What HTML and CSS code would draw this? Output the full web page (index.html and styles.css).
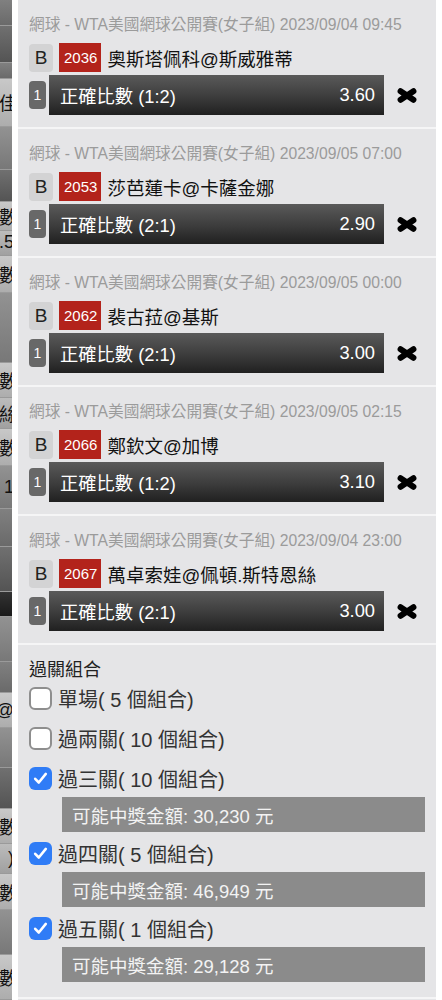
FILE: index.html
```html
<!DOCTYPE html>
<html lang="zh-TW">
<head>
    <meta charset="UTF-8">
    <meta name="viewport" content="width=device-width, initial-scale=1.0">
    <title>投注單</title>
    <link rel="stylesheet" href="styles.css">
</head>
<body>
    <div id="backdrop">
        <div class="bd-row mid h25"></div>
        <div class="bd-row dark h37"></div>
        <div class="bd-row mid h15"></div>
        <div class="bd-row light h48"><span>最佳</span></div>
        <div class="bd-row grey h43"></div>
        <div class="bd-row dark h32"></div>
        <div class="bd-row light h28"><span>比數</span></div>
        <div class="bd-row pale h25"><span class="num">5.5</span></div>
        <div class="bd-row light h37"><span>比數</span></div>
        <div class="bd-row grey h70"></div>
        <div class="bd-row light h35"><span>比數</span></div>
        <div class="bd-row pale h30"><span>組絲</span></div>
        <div class="bd-row light h37"><span>比數</span></div>
        <div class="bd-row grey h43"><span class="num">1</span></div>
        <div class="bd-row mid h37"></div>
        <div class="bd-row dark h45"></div>
        <div class="bd-row black h25"></div>
        <div class="bd-row grey h45"></div>
        <div class="bd-row mid h30"></div>
        <div class="bd-row light h35"><span class="num">@</span></div>
        <div class="bd-row grey h40"></div>
        <div class="bd-row dark h40"></div>
        <div class="bd-row light h35"><span>比數</span></div>
        <div class="bd-row pale h30"><span class="num">)</span></div>
        <div class="bd-row light h35"><span>比數</span></div>
        <div class="bd-row grey h45"></div>
        <div class="bd-row light h45"><span>比數</span></div>
    </div>

    <div id="slip">
        <div class="bet">
            <div class="bet-head">網球 - WTA美國網球公開賽(女子組) 2023/09/04 09:45</div>
            <div class="bet-match">
                <span class="tag-b">B</span>
                <span class="tag-no">2036</span>
                <span class="team">奧斯塔佩科@斯威雅蒂</span>
            </div>
            <div class="bet-pick">
                <span class="leg">1</span>
                <div class="pick-bar"><span>正確比數 (1:2)</span><span>3.60</span></div>
                <svg class="remove" width="20" height="15" viewBox="0 0 20 15"><path d="M3.6 3.2L16.4 11.8M16.4 3.2L3.6 11.8"/></svg>
            </div>
        </div>
        <div class="bet">
            <div class="bet-head">網球 - WTA美國網球公開賽(女子組) 2023/09/05 07:00</div>
            <div class="bet-match">
                <span class="tag-b">B</span>
                <span class="tag-no">2053</span>
                <span class="team">莎芭蓮卡@卡薩金娜</span>
            </div>
            <div class="bet-pick">
                <span class="leg">1</span>
                <div class="pick-bar"><span>正確比數 (2:1)</span><span>2.90</span></div>
                <svg class="remove" width="20" height="15" viewBox="0 0 20 15"><path d="M3.6 3.2L16.4 11.8M16.4 3.2L3.6 11.8"/></svg>
            </div>
        </div>
        <div class="bet">
            <div class="bet-head">網球 - WTA美國網球公開賽(女子組) 2023/09/05 00:00</div>
            <div class="bet-match">
                <span class="tag-b">B</span>
                <span class="tag-no">2062</span>
                <span class="team">裴古菈@基斯</span>
            </div>
            <div class="bet-pick">
                <span class="leg">1</span>
                <div class="pick-bar"><span>正確比數 (2:1)</span><span>3.00</span></div>
                <svg class="remove" width="20" height="15" viewBox="0 0 20 15"><path d="M3.6 3.2L16.4 11.8M16.4 3.2L3.6 11.8"/></svg>
            </div>
        </div>
        <div class="bet">
            <div class="bet-head">網球 - WTA美國網球公開賽(女子組) 2023/09/05 02:15</div>
            <div class="bet-match">
                <span class="tag-b">B</span>
                <span class="tag-no">2066</span>
                <span class="team">鄭欽文@加博</span>
            </div>
            <div class="bet-pick">
                <span class="leg">1</span>
                <div class="pick-bar"><span>正確比數 (1:2)</span><span>3.10</span></div>
                <svg class="remove" width="20" height="15" viewBox="0 0 20 15"><path d="M3.6 3.2L16.4 11.8M16.4 3.2L3.6 11.8"/></svg>
            </div>
        </div>
        <div class="bet">
            <div class="bet-head">網球 - WTA美國網球公開賽(女子組) 2023/09/04 23:00</div>
            <div class="bet-match">
                <span class="tag-b">B</span>
                <span class="tag-no">2067</span>
                <span class="team">萬卓索娃@佩頓.斯特恩絲</span>
            </div>
            <div class="bet-pick">
                <span class="leg">1</span>
                <div class="pick-bar"><span>正確比數 (2:1)</span><span>3.00</span></div>
                <svg class="remove" width="20" height="15" viewBox="0 0 20 15"><path d="M3.6 3.2L16.4 11.8M16.4 3.2L3.6 11.8"/></svg>
            </div>
        </div>

        <div class="parlay">
            <div class="parlay-title">過關組合</div>
            <div class="option">
                <span class="check"></span>
                <span>單場( 5 個組合)</span>
            </div>
            <div class="option">
                <span class="check"></span>
                <span>過兩關( 10 個組合)</span>
            </div>
            <div class="option">
                <span class="check checked"><svg width="23" height="23" viewBox="0 0 23 23"><path d="M6.2 11.8l3.6 3.7 7-8.6"/></svg></span>
                <span>過三關( 10 個組合)</span>
            </div>
            <div class="prize">可能中獎金額: 30,230 元</div>
            <div class="option">
                <span class="check checked"><svg width="23" height="23" viewBox="0 0 23 23"><path d="M6.2 11.8l3.6 3.7 7-8.6"/></svg></span>
                <span>過四關( 5 個組合)</span>
            </div>
            <div class="prize">可能中獎金額: 46,949 元</div>
            <div class="option">
                <span class="check checked"><svg width="23" height="23" viewBox="0 0 23 23"><path d="M6.2 11.8l3.6 3.7 7-8.6"/></svg></span>
                <span>過五關( 1 個組合)</span>
            </div>
            <div class="prize">可能中獎金額: 29,128 元</div>
        </div>
    </div>
</body>
</html>
```

FILE: styles.css
```css
body {
    margin: 0;
    padding: 0;
    display: flex;
    height: 1000px;
    overflow: hidden;
    background-color: #fff;
    font-family: "Liberation Sans", "Noto Sans CJK TC", sans-serif;
}
#backdrop {
    width: 12px;
    flex-shrink: 0;
    display: flex;
    flex-direction: column;
    overflow: hidden;
    margin-right: 6px;
}
.bd-row {
    display: flex;
    justify-content: flex-end;
    align-items: center;
    font-size: 18px;
    color: #111;
    white-space: nowrap;
    border-bottom: 1px solid #9a9a9a;
}
.bd-row span {
    margin-right: -5px;
}
.bd-row .num {
    margin-right: -2px;
}
.bd-row.light { background: linear-gradient(#c8c8c8, #adadad); }
.bd-row.pale { background: linear-gradient(#bcbcbc, #a0a0a0); }
.bd-row.grey { background: linear-gradient(#929292, #787878); }
.bd-row.mid { background: linear-gradient(#808080, #6a6a6a); }
.bd-row.dark { background: linear-gradient(#707070, #545454); }
.bd-row.black { background: linear-gradient(#333, #1a1a1a); }
.h15 { height: 15px; }
.h25 { height: 25px; }
.h28 { height: 28px; }
.h30 { height: 30px; }
.h32 { height: 32px; }
.h35 { height: 35px; }
.h37 { height: 37px; }
.h40 { height: 40px; }
.h43 { height: 43px; }
.h45 { height: 45px; }
.h48 { height: 48px; }
.h70 { height: 70px; }

#slip {
    width: 418px;
    flex-shrink: 0;
    background-color: #e5e5e7;
}
.bet {
    padding: 14px 11px 12px;
    border-bottom: 2px solid #f5f5f6;
}
.bet-head {
    font-size: 15.7px;
    line-height: 22px;
    color: #9b9b9b;
    white-space: nowrap;
}
.bet-match {
    display: flex;
    align-items: center;
    gap: 6px;
    height: 29px;
    margin-top: 7px;
}
.tag-b {
    width: 24px;
    height: 28px;
    border-radius: 4px;
    background-color: #d3d3d4;
    color: #222;
    font-size: 19px;
    display: flex;
    align-items: center;
    justify-content: center;
}
.tag-no {
    height: 29px;
    padding: 0 4px 0 5px;
    background-color: #b3231b;
    color: #fff;
    font-size: 15px;
    display: flex;
    align-items: center;
}
.team {
    font-size: 18.5px;
    color: #111;
    white-space: nowrap;
}
.bet-pick {
    display: flex;
    align-items: center;
    height: 40px;
    margin-top: 3px;
}
.leg {
    width: 17px;
    height: 28px;
    border-radius: 4px;
    background-color: #686868;
    color: #fff;
    font-size: 14px;
    display: flex;
    align-items: center;
    justify-content: center;
}
.pick-bar {
    margin-left: 3px;
    width: 335px;
    height: 40px;
    box-sizing: border-box;
    padding: 0 9px 0 11px;
    display: flex;
    justify-content: space-between;
    align-items: center;
    background: linear-gradient(#5a5a5a, #3c3c3c 55%, #202020);
    color: #fff;
    font-size: 18.3px;
}
.remove {
    margin-left: 13px;
}
.remove path {
    fill: none;
    stroke: #000;
    stroke-width: 6;
    stroke-linecap: round;
}

.parlay {
    padding: 13px 11px 10px;
    border-bottom: 2px solid #f5f5f6;
}
.parlay-title {
    font-size: 18px;
    line-height: 24px;
    color: #222;
}
.option {
    display: flex;
    align-items: center;
    gap: 6px;
    height: 32px;
    font-size: 20px;
    color: #333;
}
.option + .option {
    margin-top: 8px;
}
.check {
    width: 23px;
    height: 23px;
    flex-shrink: 0;
    box-sizing: border-box;
    border: 2px solid #8e8e8e;
    border-radius: 6px;
    background-color: #fff;
}
.check.checked {
    border: none;
    background-color: #2f7cf6;
}
.check svg {
    display: block;
}
.check path {
    fill: none;
    stroke: #fff;
    stroke-width: 2.6;
    stroke-linecap: round;
    stroke-linejoin: round;
}
.prize {
    margin: 3px 0 5px 33px;
    width: 363px;
    height: 35px;
    box-sizing: border-box;
    padding-left: 10px;
    display: flex;
    align-items: center;
    background-color: #8b8b8b;
    color: #f3f3f3;
    font-size: 18.5px;
}
```
